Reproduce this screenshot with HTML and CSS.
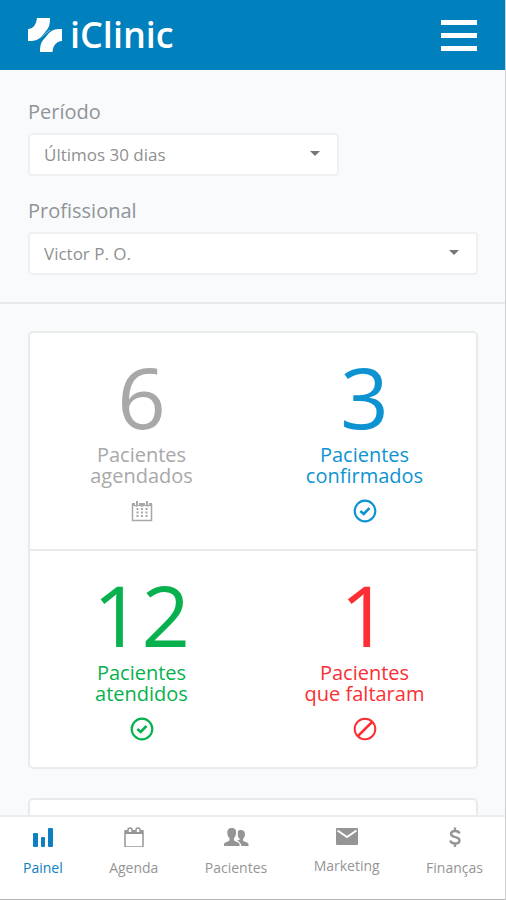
FILE: index.html
```html
<!DOCTYPE html>
<html lang="pt-BR">
<head>
<meta charset="utf-8">
<meta name="viewport" content="width=device-width, initial-scale=1">
<title>iClinic</title>
<link rel="stylesheet" href="styles.css">
</head>
<body>
<div class="app">
  <header class="topbar">
    <a class="brand" href="#">
      <svg class="brand-mark" viewBox="0 0 34 34" aria-hidden="true">
        <path d="M9 0H22C22 6 21 10 18 13L13 19C9 23 5 23 0 23V11C5 11 8 7 9 0Z"/>
        <path d="M34 11V23C29 23 25 27 24.500 34H12C12 28 13 24 16 21L21 15C25 11 29 11 34 11Z"/>
        <path d="M12 20L22 12" stroke="#8cc6e2" stroke-width="1"/>
      </svg>
      <span>iClinic</span>
    </a>
    <button class="menu" type="button" aria-label="Menu"><i></i><i></i><i></i></button>
  </header>

  <main class="content">
    <form class="filters">
      <label for="periodo">Período</label>
      <div class="field field-short">
        <select id="periodo"><option>Últimos 30 dias</option></select>
      </div>
      <label for="profissional">Profissional</label>
      <div class="field">
        <select id="profissional"><option>Victor P. O.</option></select>
      </div>
    </form>

    <section class="cards">
      <div class="card stats">
        <div class="stat scheduled">
          <strong>6</strong>
          <p>Pacientes<br>agendados</p>
          <svg viewBox="0 0 24 24" aria-hidden="true">
            <path d="M2.500 5.500H21.500V21.500H2.500Z" fill="none" stroke="currentColor" stroke-width="1.500"/>
            <path d="M2 4H22V7H19L18 8L16 7H14L12 8L10 7H8L6 8L5 7H2Z" fill="currentColor"/>
            <path d="M7 2V6M17 2V6" stroke="#fff" stroke-width="4"/>
            <path d="M7 2V6M17 2V6" stroke="currentColor" stroke-width="2"/>
            <path d="M7.500 9V18M12 9V18M16.500 9V18" stroke="currentColor" stroke-width="2" stroke-dasharray="2 1.500"/>
          </svg>
        </div>
        <div class="stat confirmed">
          <strong>3</strong>
          <p>Pacientes<br>confirmados</p>
          <svg viewBox="0 0 24 24" aria-hidden="true">
            <circle cx="12" cy="12" r="10.300" fill="none" stroke="currentColor" stroke-width="2.200"/>
            <path d="M7.300 12L10.700 15L16.500 9" fill="none" stroke="currentColor" stroke-width="2.600"/>
          </svg>
        </div>
        <div class="stat attended">
          <strong>12</strong>
          <p>Pacientes<br>atendidos</p>
          <svg viewBox="0 0 24 24" aria-hidden="true">
            <circle cx="12" cy="12" r="10.300" fill="none" stroke="currentColor" stroke-width="2.200"/>
            <path d="M7.300 12L10.700 15L16.500 9" fill="none" stroke="currentColor" stroke-width="2.600"/>
          </svg>
        </div>
        <div class="stat missed">
          <strong>1</strong>
          <p>Pacientes<br>que faltaram</p>
          <svg viewBox="0 0 24 24" aria-hidden="true">
            <circle cx="12" cy="12" r="10.300" fill="none" stroke="currentColor" stroke-width="2"/>
            <path d="M5 19L19 5" stroke="currentColor" stroke-width="2.500"/>
          </svg>
        </div>
      </div>
      <div class="card next"></div>
    </section>
  </main>

  <nav class="tabs">
    <a class="active" href="#">
      <svg width="20" height="20" viewBox="0 0 20 20" aria-hidden="true">
        <rect x="0" y="6" width="5" height="14" rx="1"/><rect x="8" y="10" width="4" height="10" rx="1"/><rect x="15" y="1" width="5" height="19" rx="1"/>
      </svg>
      Painel
    </a>
    <a href="#">
      <svg width="20" height="20" viewBox="0 0 20 20" aria-hidden="true">
        <path d="M1 4H19V19Q19 20 18 20H2Q1 20 1 19Z" fill="none" stroke="currentColor" stroke-width="1.500"/>
        <path d="M1 3H19V7H1Z"/>
        <path d="M6 0V5M14 0V5" stroke="#fff" stroke-width="5"/>
        <path d="M4 6V3Q4 1 6 1T8 3V6M12 6V3Q12 1 14 1T16 3V6" fill="none" stroke="currentColor" stroke-width="1.500"/>
      </svg>
      Agenda
    </a>
    <a href="#">
      <svg width="26" height="20" viewBox="0 0 26 20" aria-hidden="true">
        <path d="M8.500 1C12 1 13.500 3 13 6C13 8.500 12 10 11 11V13C11 14.500 16 15 16.500 17V19H1V17C1.500 15 6.500 14.500 6.500 13V11C5 10 4.500 8.500 4.300 6C4 3 5.500 1 8.500 1Z"/>
        <path d="M15 4C16 2.500 22 2 22 7C22 9.500 21 11 20 12V13.500C20 14.500 25 15 25.500 17V19H18.500C18 16 16 14.500 14 13.500C16 13 17 12.500 17 12C15 11 14.500 9 15 4Z"/>
      </svg>
      Pacientes
    </a>
    <a href="#">
      <svg width="22" height="18" viewBox="0 0 22 18" aria-hidden="true">
        <rect x="0" y="1" width="22" height="17" rx="1"/>
        <path d="M1.500 3.500L11 10L20.500 3.500" fill="none" stroke="#fff" stroke-width="2"/>
      </svg>
      Marketing
    </a>
    <a href="#">
      <svg width="12" height="20" viewBox="0 0 12 20" aria-hidden="true">
        <path d="M10.500 6.500C10 4.500 8.500 4 6 4C3.500 4 2 5 2 6.800C2 9 4 9.500 6.500 10.200C9 10.800 10.500 11.500 10.500 13.500C10.500 15.500 8.500 16.500 6 16.500C3.500 16.500 1.800 15.500 1.300 13.500M6 0.500V4M6 16.500V20" fill="none" stroke="currentColor" stroke-width="2.400"/>
      </svg>
      Finanças
    </a>
  </nav>
</div>
</body>
</html>
```
FILE: styles.css
```css
* {
  box-sizing: border-box;
}

body {
  margin: 0;
  font-family: "Open Sans", "Noto Sans", sans-serif;
  color: #909498;
  background: #f9fafc;
}

a {
  color: inherit;
  text-decoration: none;
}

.app {
  display: flex;
  flex-direction: column;
  height: 100vh;
  border-right: 1px solid #cfcfd1;
  border-bottom: 1px solid #b4b4b4;
}

.topbar {
  flex: none;
  display: flex;
  align-items: center;
  justify-content: space-between;
  height: 70px;
  padding: 0 28px;
  background: #0080bc;
  color: #fff;
}

.brand {
  display: flex;
  align-items: center;
  gap: 8px;
  font-size: 36px;
  font-weight: 600;
  line-height: 48px;
}

.brand-mark {
  width: 34px;
  height: 34px;
  fill: #fff;
}

.menu {
  display: flex;
  flex-direction: column;
  gap: 8px;
  width: 36px;
  padding: 0;
  border: 0;
  background: none;
}

.menu i {
  height: 5px;
  width: 100%;
  background: #fff;
}

.content {
  flex: 1;
  min-height: 0;
  overflow-y: auto;
  scrollbar-width: none;
}

.filters {
  padding: 28px 27px 27px 28px;
  border-bottom: 2px solid #e8eaec;
}

.filters label {
  display: block;
  font-size: 20px;
  line-height: 28px;
  margin-bottom: 7px;
}

.field {
  position: relative;
}

.field-short {
  width: 69%;
  margin-bottom: 21px;
}

.field::after {
  content: "";
  position: absolute;
  right: 19px;
  top: 18px;
  border: 5px solid transparent;
  border-top-color: #777;
  border-bottom: 0;
  pointer-events: none;
}

select {
  display: block;
  appearance: none;
  width: 100%;
  height: 43px;
  padding: 0 14px;
  border: 2px solid #eff1f1;
  border-radius: 4px;
  background: #fff;
  color: #909090;
  font: 17px "Open Sans", "Noto Sans", sans-serif;
}

.cards {
  display: grid;
  gap: 29px;
  padding: 27px 27px 27px 28px;
}

.card {
  border: 2px solid #e9ebeb;
  border-radius: 5px;
  background: #fff;
}

.next {
  height: 220px;
}

.stats {
  display: grid;
  grid-template-columns: 1fr 1fr;
}

.stat {
  display: flex;
  flex-direction: column;
  align-items: center;
  padding: 21px 0 26px;
  text-align: center;
}

.stat:nth-child(n + 3) {
  border-top: 2px solid #e9ebeb;
}

.stat strong {
  font-size: 85px;
  font-weight: 400;
  line-height: 84px;
}

.stat p {
  margin: 6px 0 13px;
  font-size: 20px;
  line-height: 21px;
}

.stat svg {
  width: 24px;
  height: 24px;
}

.scheduled {
  color: #a8a8a8;
}

.confirmed {
  color: #0d93d2;
}

.attended {
  color: #08b14e;
}

.missed {
  color: #fa3034;
}

.tabs {
  flex: none;
  display: flex;
  align-items: flex-start;
  justify-content: space-between;
  padding: 10px 22px 21px 23px;
  border-top: 2px solid #eceeee;
  background: #fff;
  color: #959595;
}

.tabs a {
  display: flex;
  flex-direction: column;
  align-items: center;
  gap: 11px;
  font-size: 14px;
  line-height: 20px;
}

.tabs svg {
  fill: currentColor;
}

.tabs .active {
  color: #0e7fc0;
}
```
